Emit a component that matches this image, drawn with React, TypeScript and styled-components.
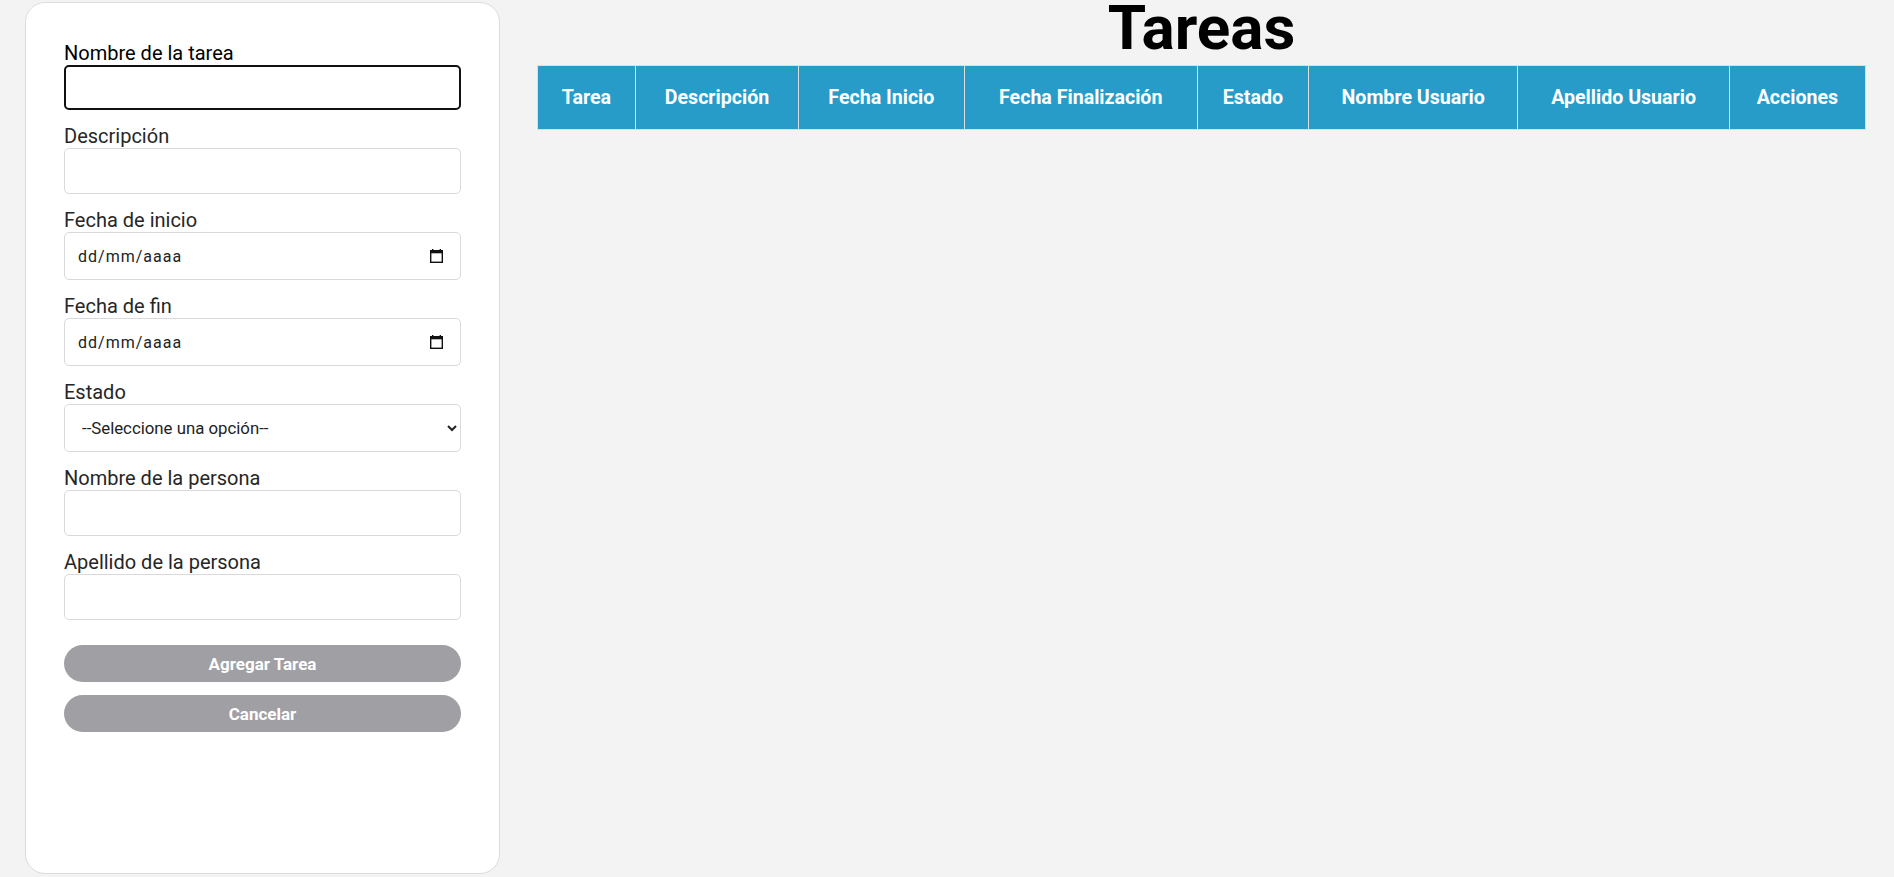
import styled, { createGlobalStyle } from "styled-components"

const GlobalStyle = createGlobalStyle`
  body {
    margin: 0;
    background: #f3f3f3;
    font-family: 'Roboto', 'Liberation Sans', sans-serif;
  }
  * {
    box-sizing: border-box;
  }
`

const Page = styled.div`
  display: flex;
  align-items: flex-start;
  gap: 37px;
  padding: 0 28px 0 25px;
  height: 877px;
`

const Card = styled.form`
  width: 475px;
  height: 872px;
  margin-top: 2px;
  flex-shrink: 0;
  background: #fff;
  border: 1px solid #dcdcdc;
  border-radius: 20px;
  padding: 38px 38px;
  display: flex;
  flex-direction: column;
`

const Field = styled.div`
  display: flex;
  flex-direction: column;
  margin-bottom: 14px;
`

const Label = styled.label<{ $dark?: boolean }>`
  font-size: 20px;
  line-height: normal;
  color: ${p => (p.$dark ? '#000' : '#262626')};
`

const Input = styled.input<{ $focused?: boolean }>`
  height: ${p => (p.$focused ? '45px' : '46px')};
  width: 100%;
  padding: 0 12px;
  font-family: 'Roboto', sans-serif;
  font-size: 16px;
  background: #fff;
  border: ${p => (p.$focused ? '2px solid #111' : '1px solid #d9d9d9')};
  border-radius: 5px;
  outline: none;
`

const DateBox = styled.div`
  height: 48px;
  display: flex;
  align-items: center;
  padding: 0 17px 0 13px;
  background: #fff;
  border: 1px solid #d9d9d9;
  border-radius: 5px;
`

const DateText = styled.input`
  flex: 1;
  border: none;
  outline: none;
  padding: 0;
  font-family: 'Roboto', sans-serif;
  font-size: 16px;
  letter-spacing: 1px;
  color: #222;

  &::placeholder {
    color: #222;
  }
`

const Select = styled.select`
  height: 48px;
  width: 100%;
  padding: 0 10px 0 13px;
  font-family: 'Roboto', sans-serif;
  font-size: 16.8px;
  color: #222;
  background: #fff;
  border: 1px solid #d9d9d9;
  border-radius: 5px;
  outline: none;
`

const Buttons = styled.div`
  display: flex;
  flex-direction: column;
  gap: 13px;
  margin-top: 11px;
`

const Button = styled.button`
  height: 37px;
  width: 100%;
  border: none;
  border-radius: 19px;
  background: #a09fa4;
  color: #fff;
  font-family: 'Roboto', sans-serif;
  font-weight: 700;
  font-size: 17px;
`

const Main = styled.main`
  flex: 1;
  display: flex;
  flex-direction: column;
`

const Title = styled.h1`
  margin: 0 0 9px;
  font-size: 62px;
  line-height: 56px;
  font-weight: 700;
  text-align: center;
  color: #000;
`

const Table = styled.table`
  width: 100%;
  border-collapse: collapse;
  border: 1px solid #dddddd;
`

const Th = styled.th`
  padding: 20px 16px;
  background: #279cc9;
  color: #fff;
  font-size: 19.6px;
  line-height: 23px;
  font-weight: 700;
  border: 1px solid #dddddd;
  text-align: center;
`

const CalendarIcon = () => (
  <svg width="13" height="14" viewBox="0 0 13 14">
    <rect x="2" y="0" width="1.4" height="3" fill="#111" />
    <rect x="9.6" y="0" width="1.4" height="3" fill="#111" />
    <rect x="0.7" y="1.7" width="11.6" height="11.6" fill="none" stroke="#111" strokeWidth="1.4" />
    <rect x="0.7" y="1.7" width="11.6" height="2.6" fill="#111" />
  </svg>
)

const DateField = ({ label }: { label: string }) => (
  <Field>
    <Label>{label}</Label>
    <DateBox>
      <DateText type="text" placeholder="dd/mm/aaaa" />
      <CalendarIcon />
    </DateBox>
  </Field>
)

const columns = [
  'Tarea',
  'Descripción',
  'Fecha Inicio',
  'Fecha Finalización',
  'Estado',
  'Nombre Usuario',
  'Apellido Usuario',
  'Acciones',
]

export default function App() {
  return (
    <Page>
      <GlobalStyle />
      <Card onSubmit={e => e.preventDefault()}>
        <Field>
          <Label $dark>Nombre de la tarea</Label>
          <Input type="text" $focused />
        </Field>
        <Field>
          <Label>Descripción</Label>
          <Input type="text" />
        </Field>
        <DateField label="Fecha de inicio" />
        <DateField label="Fecha de fin" />
        <Field>
          <Label>Estado</Label>
          <Select defaultValue="">
            <option value="">--Seleccione una opción--</option>
            <option value="pendiente">Pendiente</option>
            <option value="proceso">En proceso</option>
            <option value="terminada">Terminada</option>
          </Select>
        </Field>
        <Field>
          <Label>Nombre de la persona</Label>
          <Input type="text" />
        </Field>
        <Field>
          <Label>Apellido de la persona</Label>
          <Input type="text" />
        </Field>
        <Buttons>
          <Button type="submit">Agregar Tarea</Button>
          <Button type="button">Cancelar</Button>
        </Buttons>
      </Card>
      <Main>
        <Title>Tareas</Title>
        <Table>
          <thead>
            <tr>
              {columns.map(c => (
                <Th key={c}>{c}</Th>
              ))}
            </tr>
          </thead>
          <tbody></tbody>
        </Table>
      </Main>
    </Page>
  )
}
